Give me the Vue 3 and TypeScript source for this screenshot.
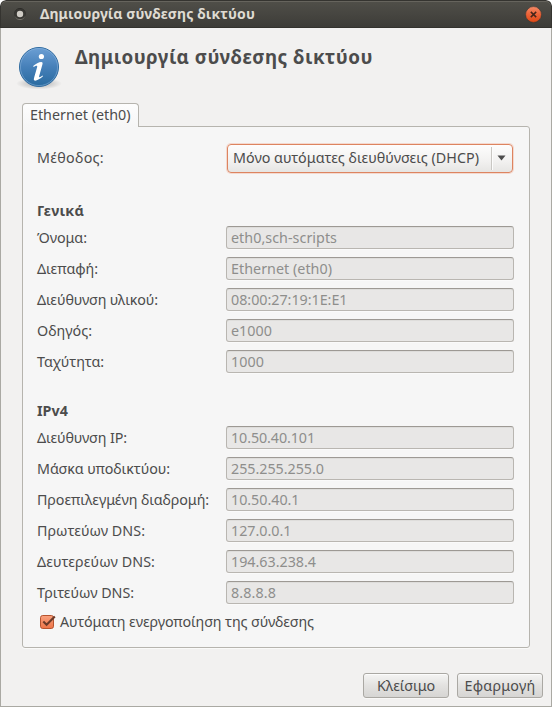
<script setup lang="ts">
import { reactive, type Directive } from 'vue'

interface Row { label: string; labelWidth: number; value: string; valueWidth: number }
interface Group { title: string; width: number; rows: Row[] }

const form = reactive({ autoConnect: true })

const groups: Group[] = [
  {
    title: 'Γενικά',
    width: 47,
    rows: [
      { label: 'Όνομα:', labelWidth: 50, value: 'eth0,sch-scripts', valueWidth: 106 },
      { label: 'Διεπαφή:', labelWidth: 61, value: 'Ethernet (eth0)', valueWidth: 101 },
      { label: 'Διεύθυνση υλικού:', labelWidth: 121, value: '08:00:27:19:1E:E1', valueWidth: 116.5 },
      { label: 'Οδηγός:', labelWidth: 55, value: 'e1000', valueWidth: 41 },
      { label: 'Ταχύτητα:', labelWidth: 67, value: '1000', valueWidth: 33 },
    ],
  },
  {
    title: 'IPv4',
    width: 31,
    rows: [
      { label: 'Διεύθυνση IP:', labelWidth: 90, value: '10.50.40.101', valueWidth: 84 },
      { label: 'Μάσκα υποδικτύου:', labelWidth: 133, value: '255.255.255.0', valueWidth: 93 },
      { label: 'Προεπιλεγμένη διαδρομή:', labelWidth: 172, value: '10.50.40.1', valueWidth: 68.5 },
      { label: 'Πρωτεύων DNS:', labelWidth: 108, value: '127.0.0.1', valueWidth: 60.5 },
      { label: 'Δευτερεύων DNS:', labelWidth: 118, value: '194.63.238.4', valueWidth: 85 },
      { label: 'Τριτεύων DNS:', labelWidth: 97, value: '8.8.8.8', valueWidth: 45 },
    ],
  },
]

// Tracks a line of text so that it fills the given width.
const vFit: Directive<HTMLElement, number> = {
  mounted(el, binding) {
    const count = (el.textContent ?? '').length
    const natural = el.getBoundingClientRect().width
    if (count > 0) el.style.letterSpacing = `${(binding.value - natural) / count}px`
  },
}
</script>

<template>
  <div class="window">
    <header class="titlebar">
      <svg class="app-dot" width="14" height="14" viewBox="0 0 14 14">
        <defs>
          <linearGradient id="dotRing" x1="0" y1="0" x2="0" y2="1">
            <stop offset="0" stop-color="#2d2c29" />
            <stop offset=".65" stop-color="#3a3935" />
            <stop offset="1" stop-color="#77756d" />
          </linearGradient>
        </defs>
        <circle cx="7" cy="7" r="5.6" fill="#383733" stroke="url(#dotRing)" />
        <circle cx="7" cy="7" r="3.2" fill="#cfccc5" />
      </svg>
      <span class="title"><span v-fit="215">Δημιουργία σύνδεσης δικτύου</span></span>
      <svg class="close" width="17" height="17" viewBox="0 0 17 17">
        <defs>
          <linearGradient id="closeFill" x1="0" y1="0" x2="0" y2="1">
            <stop offset="0" stop-color="#f58b68" />
            <stop offset=".5" stop-color="#ec6237" />
            <stop offset="1" stop-color="#df4814" />
          </linearGradient>
        </defs>
        <circle cx="8.5" cy="8.5" r="7.9" fill="url(#closeFill)" stroke="#34332f" stroke-width=".5" />
        <path d="M5.8 5.9 L11.2 11.1 M11.2 5.9 L5.8 11.1" stroke="#46261b" stroke-width="1.5" />
      </svg>
    </header>

    <main class="body">
      <div class="intro">
        <svg class="info" width="46" height="46" viewBox="0 0 46 46">
          <defs>
            <linearGradient id="infoFill" x1="0" y1="0" x2="0" y2="1">
              <stop offset="0" stop-color="#6c9fd4" />
              <stop offset=".5" stop-color="#4680b9" />
              <stop offset="1" stop-color="#286a9f" />
            </linearGradient>
            <radialGradient id="infoShade">
              <stop offset="0" stop-color="#000" stop-opacity=".3" />
              <stop offset="1" stop-color="#000" stop-opacity="0" />
            </radialGradient>
          </defs>
          <ellipse cx="23" cy="38.5" rx="23" ry="6" fill="url(#infoShade)" />
          <circle cx="23" cy="22" r="19.5" fill="url(#infoFill)" stroke="#2f6ba0" />
          <circle cx="23" cy="22" r="18.6" fill="none" stroke="#8fb8e0" stroke-opacity=".5" />
          <circle cx="25.4" cy="11.5" r="2.6" fill="#fff" />
          <path d="M17.2 21.1 C19.7 18.5 22.9 16.9 25.2 16.9 C26.8 16.9 26.8 18 26.4 19.5 L23.2 31 C22.8 32.5 23.5 32.8 26.6 30.4 L27 31.3 C24.2 34 20.4 36 18.7 35.6 C17.3 35.3 17.9 33.4 18.3 31.9 L21.1 22.2 C21.6 20.3 20.6 20 17.6 22 Z" fill="#fff" />
        </svg>
        <h1><span v-fit="298">Δημιουργία σύνδεσης δικτύου</span></h1>
      </div>

      <div class="tab"><span v-fit="100.5">Ethernet (eth0)</span></div>
      <section class="panel">
        <div class="method">
          <span class="label"><span v-fit="67">Μέθοδος:</span></span>
          <button class="combo" type="button">
            <span class="choice"><span v-fit="246">Μόνο αυτόματες διευθύνσεις (DHCP)</span></span>
            <span class="arrow">
              <svg width="9" height="6" viewBox="0 0 9 6"><path d="M.5 .4 H8.5 L4.5 5.6 Z" fill="#4c4c4c" /></svg>
            </span>
          </button>
        </div>

        <div v-for="group in groups" :key="group.title" class="group">
          <h2><span v-fit="group.width">{{ group.title }}</span></h2>
          <div v-for="row in group.rows" :key="row.label" class="row">
            <span class="label"><span v-fit="row.labelWidth">{{ row.label }}</span></span>
            <div class="field"><span v-fit="row.valueWidth">{{ row.value }}</span></div>
          </div>
        </div>

        <div class="check" @click="form.autoConnect = !form.autoConnect">
          <svg width="17" height="16" viewBox="0 0 17 16">
            <defs>
              <linearGradient id="checkFill" x1="0" y1="0" x2="0" y2="1">
                <stop offset="0" stop-color="#f9a17e" />
                <stop offset="1" stop-color="#ed7447" />
              </linearGradient>
            </defs>
            <rect x=".5" y="1.5" width="13" height="13" rx="2.2" fill="url(#checkFill)" stroke="#b5532f" />
            <path v-if="form.autoConnect" d="M3.3 7.5 L6.6 10.8 L14.8 2.4" fill="none" stroke="#6b3a29" stroke-width="2.1" />
          </svg>
          <span v-fit="254">Αυτόματη ενεργοποίηση της σύνδεσης</span>
        </div>
      </section>

      <footer class="actions">
        <button type="button"><span v-fit="58">Κλείσιμο</span></button>
        <button type="button"><span v-fit="71">Εφαρμογή</span></button>
      </footer>
    </main>
  </div>
</template>

<style>
body { background: #fff; }
</style>

<style scoped>
* { box-sizing: border-box; }
.window {
  width: 552px;
  height: 707px;
  display: flex;
  flex-direction: column;
  overflow: hidden;
  border-radius: 6px 6px 0 0;
  background: #f2f1f0;
  color: #4c4c4c;
  font: 14.3px/20px "Noto Sans", "Open Sans", sans-serif;
  white-space: nowrap;
}
.titlebar {
  height: 28px;
  flex: none;
  display: flex;
  align-items: center;
  padding: 0 10px 0 12px;
  border: 1px solid #353430;
  border-bottom-color: #33322e;
  border-radius: 6px 6px 0 0;
  background: linear-gradient(#504f49, #3d3c38);
  box-shadow: inset 0 1px #66645d;
}
.app-dot { flex: none; margin-right: 13px; }
.title {
  flex: 1;
  color: #dfdbd2;
  font-size: 14px;
  font-weight: 700;
}
.close { flex: none; margin-right: -1px; }
.body {
  flex: 1;
  display: flex;
  flex-direction: column;
  padding: 16px 21px 0;
  border: 1px solid #aaa9a3;
  border-top: 0;
}
.intro { display: flex; height: 59px; flex: none; }
.info { flex: none; margin: 1px 11px 0 -6px; }
h1 {
  margin: 0;
  padding-left: 2px;
  font-size: 18.8px;
  line-height: 26px;
  font-weight: 700;
}
.tab {
  position: relative;
  z-index: 1;
  width: 117px;
  height: 24px;
  flex: none;
  margin-bottom: -1px;
  padding: 1px 0 0 7px;
  border: 1px solid #b6b4ae;
  border-bottom: 0;
  border-radius: 4px 4px 0 0;
  background: linear-gradient(#fdfdfd, #f6f6f6);
}
.panel {
  width: 508px;
  height: 522px;
  flex: none;
  padding: 16px 15px 0 14px;
  border: 1px solid #b6b4ae;
  border-radius: 0 3px 3px 3px;
  background: #f6f6f6;
  box-shadow: 0 1px #fafaf9;
}
.method { display: flex; align-items: center; height: 30px; margin-bottom: 28px; }
.label { width: 189px; flex: none; }
.combo {
  width: 286px;
  height: 29px;
  margin: 0 0 0 1px;
  padding: 0 0 0 5px;
  display: flex;
  align-items: center;
  border: 1px solid #dd8460;
  border-radius: 4px;
  background: linear-gradient(#fdfdfd, #f2f1f0 60%, #e6e5e3);
  box-shadow: 0 0 0 1px rgba(240, 150, 115, .3);
  color: inherit;
  font: inherit;
}
.choice { width: 258px; flex: none; text-align: left; }
.arrow {
  display: flex;
  align-items: center;
  height: 23px;
  padding-left: 5px;
  border-left: 1px solid #c9c7c3;
  box-shadow: inset 1px 0 #fcfcfc;
}
.group { margin-bottom: 28px; }
.group:nth-last-child(2) { margin-bottom: 0; }
h2 {
  height: 25px;
  margin: 0;
  font-size: 14.3px;
  line-height: 20px;
  font-weight: 700;
}
.row { display: flex; align-items: center; height: 23px; margin-bottom: 8px; }
.field {
  width: 288px;
  height: 23px;
  padding-left: 4px;
  border: 1px solid #b9b6b1;
  border-top-color: #9d9994;
  border-radius: 3px;
  background: #e8e7e6;
  box-shadow: inset 0 1px #dedddb, 0 1px #fafafa;
  color: #8e8e8c;
  line-height: 22px;
}
.check { display: flex; align-items: center; height: 20px; margin-left: 3px; }
.check svg { margin-right: 3px; }
.actions {
  display: flex;
  justify-content: flex-end;
  gap: 8px;
  margin: 25px -13px 0 0;
}
.actions button {
  width: 86px;
  height: 25px;
  padding: 0;
  border: 1px solid #aaa8a3;
  border-radius: 3px;
  background: linear-gradient(#f5f5f4, #e3e2e0 50%, #d6d5d3);
  box-shadow: inset 0 1px #fcfcfc, 0 1px #f9f8f7;
  color: inherit;
  font: inherit;
  line-height: 22px;
}
</style>
